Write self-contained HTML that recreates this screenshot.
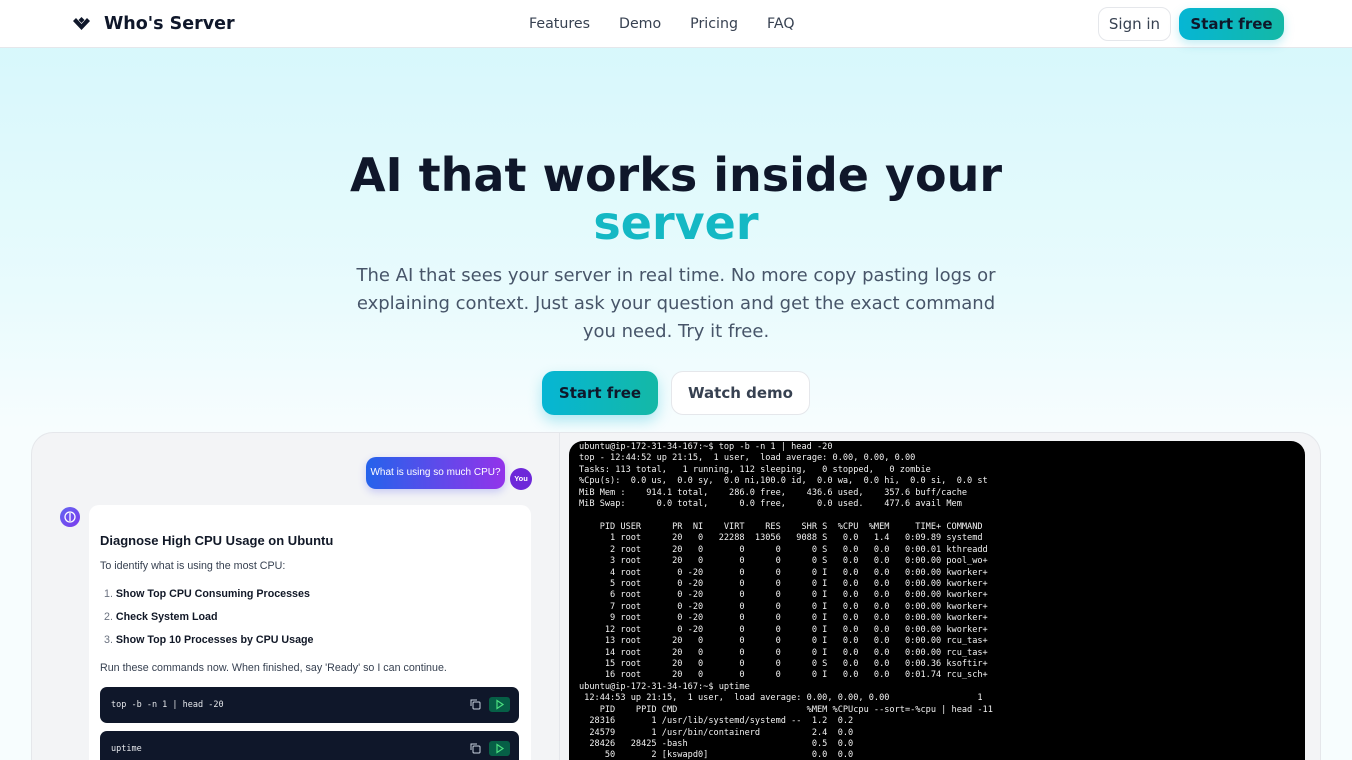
<!DOCTYPE html>
<html><head><meta charset="utf-8"><style>
*{box-sizing:border-box;margin:0;padding:0}
html{width:1352px;height:760px;overflow:hidden}
body{width:1352px;height:760px;overflow:hidden;font-family:"DejaVu Sans","Liberation Sans",sans-serif;background:linear-gradient(#d4f7fb 0,#e9fbfd 300px,#f7fdfe 430px);position:relative;color:#0f172a}
.nav{position:absolute;top:0;left:0;width:1352px;height:48px;background:#fff;border-bottom:1px solid #e5e7eb}
.logo{position:absolute;left:72px;top:14px;font-weight:bold;font-size:17.5px;display:flex;align-items:center;gap:13px;color:#0f172a}
.links{position:absolute;top:16px;left:529px;font-size:14.2px;color:#374151}
.links span{margin-right:29px}
.signin{position:absolute;left:1098px;top:7px;width:73px;height:34px;border:1px solid #e5e7eb;border-radius:10px;background:#fff;font-size:15px;color:#374151;text-align:center;line-height:32px}
.sf{position:absolute;left:1179px;top:8px;width:105px;height:32px;border-radius:11px;background:linear-gradient(90deg,#06b6d4,#14b8a6);font-weight:bold;font-size:15px;text-align:center;line-height:32px;color:#0f172a;box-shadow:0 4px 10px rgba(6,182,212,.25)}
h1{position:absolute;top:151px;left:0;width:1352px;text-align:center;font-size:46px;line-height:48px;font-weight:bold;color:#0f172a}
h1 b{color:#14b8c4}
.sub{position:absolute;top:262px;left:340px;width:672px;text-align:center;font-size:18px;line-height:28px;color:#475569}
.b1{position:absolute;left:542px;top:371px;width:116px;height:44px;border-radius:12px;background:linear-gradient(90deg,#06b6d4,#14b8a6);font-weight:bold;font-size:15px;line-height:44px;text-align:center;color:#0f172a;box-shadow:0 6px 14px rgba(6,182,212,.3)}
.b2{position:absolute;left:671px;top:371px;width:139px;height:44px;border-radius:12px;background:#fff;border:1px solid #e5e7eb;font-weight:bold;font-size:15px;line-height:42px;text-align:center;color:#374151}
.panel{position:absolute;left:31px;top:432px;width:1290px;height:328px;border-radius:22px 22px 0 0;background:#f3f4f6;border:1px solid #e5e7eb;border-bottom:none;overflow:hidden}
.div{position:absolute;left:527px;top:0;width:1px;height:100%;background:#e5e7eb}
.term{position:absolute;left:537px;top:8px;width:736px;height:340px;background:#000;border-radius:14px;font-family:"DejaVu Sans Mono","Liberation Mono",monospace;font-size:8.6px;line-height:11.42px;color:#f1f1f1;padding:1px 0 0 10px;white-space:pre}
.bub{position:absolute;left:334px;top:24px;width:139px;height:32px;border-radius:10px;background:linear-gradient(90deg,#2563eb,#9333ea);color:#fff;font-family:"Liberation Sans",sans-serif;font-size:10px;line-height:32px;text-align:center;box-shadow:0 3px 8px rgba(99,102,241,.3)}
.you{position:absolute;left:478px;top:35px;width:22px;height:22px;border-radius:50%;background:#6d28d9;color:#fff;font-size:7.5px;font-weight:bold;text-align:center;line-height:22px;font-family:"Liberation Sans",sans-serif}
.bot{position:absolute;left:28px;top:74px;width:20px;height:20px;border-radius:50%;background:linear-gradient(135deg,#6366f1,#7c3aed);line-height:0}
.card{position:absolute;left:57px;top:72px;width:442px;height:300px;background:#fff;border-radius:10px;font-family:"Liberation Sans",sans-serif;color:#374151}
.card h3{position:absolute;left:11px;top:28px;font-size:13px;color:#111827;font-family:"Liberation Sans",sans-serif}
.t{position:absolute;left:11px;font-size:10.7px}
.code{position:absolute;left:11px;width:419px;height:36px;background:#0f172a;border-radius:7px;color:#e5e7eb;font-family:"DejaVu Sans Mono",monospace;font-size:8.5px;line-height:36px;padding-left:11px}
.run{position:absolute;right:9px;top:10px;width:21px;height:15px;background:#065f46;border-radius:3px;line-height:0}
.run svg{display:block}
.cp{position:absolute;right:38px;top:12px}
</style></head><body>
<div class="nav">
<div class="logo"><svg width="19" height="17" viewBox="0 0 19 17"><path d="M1 5l8.5 9 8.5-9-3-3-5.5 6-5.5-6z" fill="#0f172a"/><path d="M9.5 1l3 3-3 3-3-3z" fill="#0f172a"/></svg>Who's Server</div>
<div class="links"><span>Features</span><span>Demo</span><span>Pricing</span><span>FAQ</span></div>
<div class="signin">Sign in</div><div class="sf">Start free</div>
</div>
<h1>AI that works inside your<br><b>server</b></h1>
<div class="sub">The AI that sees your server in real time. No more copy pasting logs or explaining context. Just ask your question and get the exact command you need. Try it free.</div>
<div class="b1">Start free</div><div class="b2">Watch demo</div>
<div class="panel">
<div class="div"></div>
<div class="bub">What is using so much CPU?</div><div class="you">You</div>
<div class="bot"><svg width="20" height="20" viewBox="0 0 20 20"><circle cx="10" cy="10" r="5" fill="none" stroke="#fff" stroke-width="1.3"/><path d="M10 6v8" stroke="#fff" stroke-width="1.3"/></svg></div>
<div class="card">
<h3>Diagnose High CPU Usage on Ubuntu</h3>
<div class="t" style="top:55px">To identify what is using the most CPU:</div>
<div class="t" style="top:83px;color:#111827;left:15px"><span style="color:#6b7280">1.</span> <b>Show Top CPU Consuming Processes</b></div>
<div class="t" style="top:106px;color:#111827;left:15px"><span style="color:#6b7280">2.</span> <b>Check System Load</b></div>
<div class="t" style="top:129px;color:#111827;left:15px"><span style="color:#6b7280">3.</span> <b>Show Top 10 Processes by CPU Usage</b></div>
<div class="t" style="top:157px">Run these commands now. When finished, say 'Ready' so I can continue.</div>
<div class="code" style="top:182px">top -b -n 1 | head -20<svg class="cp" width="11" height="11" viewBox="0 0 11 11"><rect x="3" y="3" width="7" height="7" rx="1" fill="none" stroke="#cbd5e1"/><path d="M1 7V1h6" fill="none" stroke="#cbd5e1"/></svg><div class="run"><svg width="21" height="15" viewBox="0 0 21 15"><path d="M8 3.5l6 4-6 4z" fill="none" stroke="#4ade80" stroke-width="1.2"/></svg></div></div>
<div class="code" style="top:226px">uptime<svg class="cp" width="11" height="11" viewBox="0 0 11 11"><rect x="3" y="3" width="7" height="7" rx="1" fill="none" stroke="#cbd5e1"/><path d="M1 7V1h6" fill="none" stroke="#cbd5e1"/></svg><div class="run"><svg width="21" height="15" viewBox="0 0 21 15"><path d="M8 3.5l6 4-6 4z" fill="none" stroke="#4ade80" stroke-width="1.2"/></svg></div></div>
</div>
<div class="term">ubuntu@ip-172-31-34-167:~$ top -b -n 1 | head -20
top - 12:44:52 up 21:15,  1 user,  load average: 0.00, 0.00, 0.00
Tasks: 113 total,   1 running, 112 sleeping,   0 stopped,   0 zombie
%Cpu(s):  0.0 us,  0.0 sy,  0.0 ni,100.0 id,  0.0 wa,  0.0 hi,  0.0 si,  0.0 st
MiB Mem :    914.1 total,    286.0 free,    436.6 used,    357.6 buff/cache
MiB Swap:      0.0 total,      0.0 free,      0.0 used.    477.6 avail Mem

    PID USER      PR  NI    VIRT    RES    SHR S  %CPU  %MEM     TIME+ COMMAND
      1 root      20   0   22288  13056   9088 S   0.0   1.4   0:09.89 systemd
      2 root      20   0       0      0      0 S   0.0   0.0   0:00.01 kthreadd
      3 root      20   0       0      0      0 S   0.0   0.0   0:00.00 pool_wo+
      4 root       0 -20       0      0      0 I   0.0   0.0   0:00.00 kworker+
      5 root       0 -20       0      0      0 I   0.0   0.0   0:00.00 kworker+
      6 root       0 -20       0      0      0 I   0.0   0.0   0:00.00 kworker+
      7 root       0 -20       0      0      0 I   0.0   0.0   0:00.00 kworker+
      9 root       0 -20       0      0      0 I   0.0   0.0   0:00.00 kworker+
     12 root       0 -20       0      0      0 I   0.0   0.0   0:00.00 kworker+
     13 root      20   0       0      0      0 I   0.0   0.0   0:00.00 rcu_tas+
     14 root      20   0       0      0      0 I   0.0   0.0   0:00.00 rcu_tas+
     15 root      20   0       0      0      0 S   0.0   0.0   0:00.36 ksoftir+
     16 root      20   0       0      0      0 I   0.0   0.0   0:01.74 rcu_sch+
ubuntu@ip-172-31-34-167:~$ uptime
 12:44:53 up 21:15,  1 user,  load average: 0.00, 0.00, 0.00                 1
    PID    PPID CMD                         %MEM %CPUcpu --sort=-%cpu | head -11
  28316       1 /usr/lib/systemd/systemd --  1.2  0.2
  24579       1 /usr/bin/containerd          2.4  0.0
  28426   28425 -bash                        0.5  0.0
     50       2 [kswapd0]                    0.0  0.0</div>
</div>
</body></html>
